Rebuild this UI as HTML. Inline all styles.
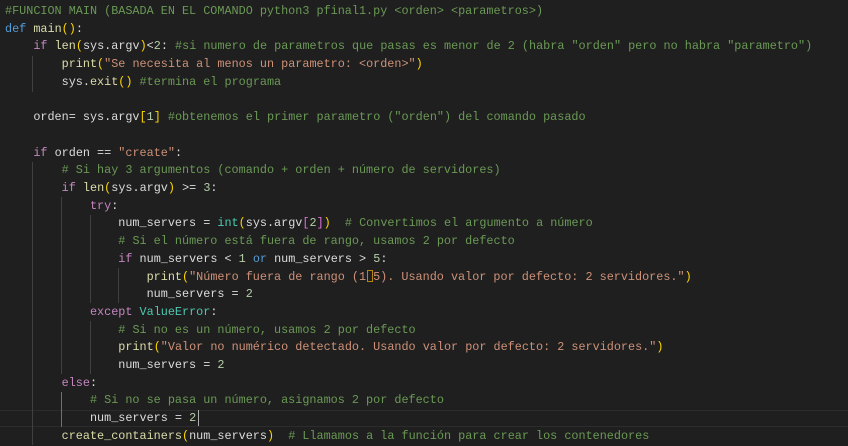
<!DOCTYPE html>
<html><head><meta charset="utf-8"><style>
html,body{margin:0;padding:0;background:#1f1f1f;width:848px;height:446px;overflow:hidden}
pre{margin:0;position:absolute;left:5px;top:3px;font-family:"Liberation Mono",monospace;font-size:11.8px;line-height:17.7px;color:#dcdcdc;letter-spacing:0}
.c{color:#6a9955}.k{color:#569cd6}.p{color:#c586c0}.f{color:#dcdcaa}.s{color:#ce9178}.n{color:#b5cea8}.t{color:#4ec9b0}.b1{color:#ffd700}.b2{color:#da70d6}
.g{position:absolute;width:1px;background:#404040}
.cl{position:absolute;left:0;width:848px;top:410px;height:15px;border-top:1px solid #2c2c2c;border-bottom:1px solid #2c2c2c}
.cur{position:absolute;left:198px;top:410px;width:1px;height:16px;background:#aeafad}
.bx{display:inline-block;width:6px;height:12px;border:1px solid #b8860b;box-sizing:border-box;vertical-align:-2px;margin:0 0.5px}
</style></head><body>
<div class="cl"></div>
<div class="g" style="left:32px;top:56px;height:36px"></div>
<div class="g" style="left:32px;top:162px;height:283px"></div>
<div class="g" style="left:61px;top:197px;height:177px"></div>
<div class="g" style="left:61px;top:392px;height:35px;background:#707070"></div>
<div class="g" style="left:90px;top:215px;height:88px"></div>
<div class="g" style="left:90px;top:321px;height:53px"></div>
<div class="g" style="left:118px;top:268px;height:35px"></div>
<pre><span class="c">#FUNCION MAIN (BASADA EN EL COMANDO python3 pfinal1.py &lt;orden&gt; &lt;parametros&gt;)</span>
<span class="k">def</span> <span class="f">main</span><span class="b1">()</span>:
    <span class="p">if</span> <span class="f">len</span><span class="b1">(</span>sys.argv<span class="b1">)</span>&lt;<span class="n">2</span>: <span class="c">#si numero de parametros que pasas es menor de 2 (habra "orden" pero no habra "parametro")</span>
        <span class="f">print</span><span class="b1">(</span><span class="s">"Se necesita al menos un parametro: &lt;orden&gt;"</span><span class="b1">)</span>
        sys.<span class="f">exit</span><span class="b1">()</span> <span class="c">#termina el programa</span>

    orden= sys.argv<span class="b1">[</span><span class="n">1</span><span class="b1">]</span> <span class="c">#obtenemos el primer parametro ("orden") del comando pasado</span>

    <span class="p">if</span> orden == <span class="s">"create"</span>:
        <span class="c"># Si hay 3 argumentos (comando + orden + número de servidores)</span>
        <span class="p">if</span> <span class="f">len</span><span class="b1">(</span>sys.argv<span class="b1">)</span> &gt;= <span class="n">3</span>:
            <span class="p">try</span>:
                num_servers = <span class="t">int</span><span class="b1">(</span>sys.argv<span class="b2">[</span><span class="n">2</span><span class="b2">]</span><span class="b1">)</span>  <span class="c"># Convertimos el argumento a número</span>
                <span class="c"># Si el número está fuera de rango, usamos 2 por defecto</span>
                <span class="p">if</span> num_servers &lt; <span class="n">1</span> <span class="k">or</span> num_servers &gt; <span class="n">5</span>:
                    <span class="f">print</span><span class="b1">(</span><span class="s">"Número fuera de rango (1<span class="bx"></span>5). Usando valor por defecto: 2 servidores."</span><span class="b1">)</span>
                    num_servers = <span class="n">2</span>
            <span class="p">except</span> <span class="t">ValueError</span>:
                <span class="c"># Si no es un número, usamos 2 por defecto</span>
                <span class="f">print</span><span class="b1">(</span><span class="s">"Valor no numérico detectado. Usando valor por defecto: 2 servidores."</span><span class="b1">)</span>
                num_servers = <span class="n">2</span>
        <span class="p">else</span>:
            <span class="c"># Si no se pasa un número, asignamos 2 por defecto</span>
            num_servers = <span class="n">2</span>
        <span class="f">create_containers</span><span class="b1">(</span>num_servers<span class="b1">)</span>  <span class="c"># Llamamos a la función para crear los contenedores</span></pre>
<div class="cur"></div>
</body></html>
